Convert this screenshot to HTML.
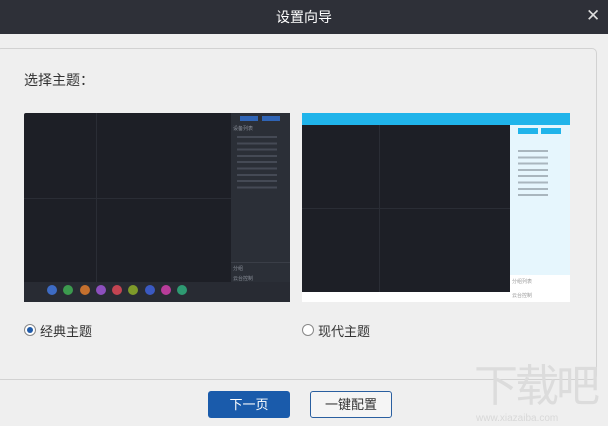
<!DOCTYPE html>
<html><head><meta charset="utf-8"><style>
*{margin:0;padding:0;box-sizing:border-box}
html,body{width:608px;height:426px;overflow:hidden}
body{background:#efefef;font-family:"Liberation Sans","Noto Sans CJK SC",sans-serif;position:relative}
.a{position:absolute}
.t{font-size:5px;color:#8a8f99;white-space:nowrap}
</style></head><body>
<div class="a" style="left:0;top:0;width:608px;height:34px;background:#2e3038"></div>
<div class="a" style="left:0;top:0;width:608px;height:34px;line-height:34px;text-align:center;color:#fff;font-size:14px">设置向导</div>
<div class="a" style="left:586px;top:6px;color:#ddd;font-size:17px">✕</div>
<div class="a" style="left:-4px;top:48px;width:601px;height:332px;border:1px solid #d2d2d2;border-radius:5px;background:#efefef"></div>
<div class="a" style="left:24px;top:70px;font-size:14px;color:#333">选择主题：</div>

<!-- classic -->
<div class="a" style="left:24px;top:113px;width:266px;height:189px;background:#1d1f26;border-radius:2px"></div>
<div class="a" style="left:96px;top:113px;width:1px;height:169px;background:#2a2d35"></div>
<div class="a" style="left:24px;top:198px;width:207px;height:1px;background:#2a2d35"></div>
<div class="a" style="left:231px;top:113px;width:59px;height:169px;background:#2b2f37"></div>
<div class="a" style="left:240px;top:116px;width:18px;height:5px;background:#2f64b5"></div>
<div class="a" style="left:262px;top:116px;width:18px;height:5px;background:#2f64b5"></div>
<div class="a t" style="left:233px;top:125px">设备列表</div>
<div class="a" style="left:237px;top:134px;width:40px;height:58px;background:repeating-linear-gradient(#2b2f37 0 2px,#454a55 2px 4px,#2b2f37 4px 6.3px)"></div>
<div class="a" style="left:231px;top:262px;width:59px;height:1px;background:#3a3e47"></div>
<div class="a t" style="left:233px;top:265px">分组</div>
<div class="a t" style="left:233px;top:275px">云台控制</div>
<div class="a" style="left:24px;top:282px;width:266px;height:20px;background:#282b33"></div>
<div class="a" style="left:47px;top:285px;width:140px;height:10px;display:flex;justify-content:space-between">
<i style="width:10px;height:10px;border-radius:50%;background:#3d6bc4"></i><i style="width:10px;height:10px;border-radius:50%;background:#3c9a4e"></i><i style="width:10px;height:10px;border-radius:50%;background:#c5702e"></i><i style="width:10px;height:10px;border-radius:50%;background:#8d4fbe"></i><i style="width:10px;height:10px;border-radius:50%;background:#c34452"></i><i style="width:10px;height:10px;border-radius:50%;background:#7e9a2a"></i><i style="width:10px;height:10px;border-radius:50%;background:#3a59c2"></i><i style="width:10px;height:10px;border-radius:50%;background:#b83c9a"></i><i style="width:10px;height:10px;border-radius:50%;background:#2e9a72"></i></div>

<!-- modern -->
<div class="a" style="left:302px;top:113px;width:268px;height:189px;background:#fff"></div>
<div class="a" style="left:302px;top:113px;width:268px;height:12px;background:#20b4ea"></div>
<div class="a" style="left:302px;top:125px;width:208px;height:167px;background:#1d1f26"></div>
<div class="a" style="left:379px;top:125px;width:1px;height:167px;background:#2a2d35"></div>
<div class="a" style="left:302px;top:208px;width:208px;height:1px;background:#2a2d35"></div>
<div class="a" style="left:510px;top:125px;width:60px;height:150px;background:#e6f6fd"></div>
<div class="a" style="left:518px;top:128px;width:20px;height:6px;background:#20b4ea"></div>
<div class="a" style="left:541px;top:128px;width:20px;height:6px;background:#20b4ea"></div>
<div class="a" style="left:518px;top:148px;width:30px;height:48px;background:repeating-linear-gradient(#e6f6fd 0 2px,#a9b6be 2px 4px,#e6f6fd 4px 6.3px)"></div>
<div class="a t" style="left:512px;top:278px;color:#999">分组列表</div>
<div class="a t" style="left:512px;top:292px;color:#999">云台控制</div>

<div class="a" style="left:24px;top:324px;width:12px;height:12px;border-radius:50%;border:1px solid #888;background:#fff"></div>
<div class="a" style="left:27px;top:327px;width:6px;height:6px;border-radius:50%;background:#1f5aa8"></div>
<div class="a" style="left:40px;top:321px;font-size:13px;color:#333">经典主题</div>
<div class="a" style="left:302px;top:324px;width:12px;height:12px;border-radius:50%;border:1px solid #888;background:#fff"></div>
<div class="a" style="left:318px;top:321px;font-size:13px;color:#333">现代主题</div>

<div class="a" style="left:208px;top:391px;width:82px;height:27px;background:#1a5bab;border-radius:3px;color:#fff;font-size:13px;text-align:center;line-height:27px">下一页</div>
<div class="a" style="left:310px;top:391px;width:82px;height:27px;border:1px solid #2a5fa0;border-radius:3px;color:#333;font-size:13px;text-align:center;line-height:25px;background:#f5f5f5">一键配置</div>
<div class="a" style="left:474px;top:362px;width:140px;font-size:44px;line-height:50px;color:#dcdcdc;white-space:nowrap;letter-spacing:-3px">下载吧</div>
<div class="a" style="left:476px;top:413px;font-size:10px;color:#d8d8d8;white-space:nowrap">www.xiazaiba.com</div>
</body></html>
